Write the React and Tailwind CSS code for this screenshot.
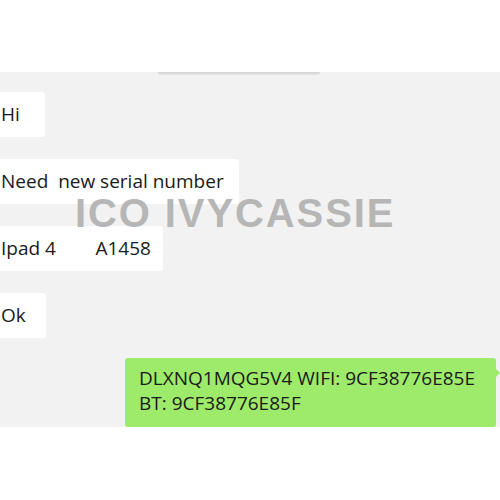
const LEFT_MESSAGES = [
  { text: "Hi", width: "w-[45px]" },
  { text: "Need  new serial number", width: "w-[239px]" },
  { text: "Ipad 4        A1458", width: "w-[163px]" },
  { text: "Ok", width: "w-[46px]" },
];

export default function App() {
  return (
    <div
      className="relative w-[500px] h-[500px] bg-white flex flex-col overflow-hidden"
      style={{ fontFamily: '"Open Sans", "Noto Sans", sans-serif' }}
    >
      {/* top white strip */}
      <div className="h-[72px] shrink-0" />

      {/* chat area */}
      <div className="h-[355px] shrink-0 bg-[#f2f2f2] flex flex-col">
        <div className="h-[3px] w-[162px] ml-[158px] bg-gradient-to-b from-[#d2d2d2] to-[#e6e6e6] rounded-b-sm" />

        <div className="flex flex-col gap-[22px] mt-[17px]">
          {LEFT_MESSAGES.map((msg) => (
            <div
              key={msg.text}
              className={`${msg.width} h-[45px] bg-white flex items-center pl-[1px] text-[19px] text-[#1a1a1a] whitespace-pre rounded-r-[3px]`}
            >
              {msg.text}
            </div>
          ))}
        </div>

        {/* outgoing bubble */}
        <div className="mt-[20px] ml-[125px] relative w-[371px] h-[70px] bg-[#9eea6a] rounded-[3px] pl-[14px] pt-[8px] text-[19px] leading-[25px] text-[#1a1a1a]">
          <div>DLXNQ1MQG5V4 WIFI: 9CF38776E85E</div>
          <div>BT: 9CF38776E85F</div>
          <span className="absolute -right-[4px] top-[10px] w-0 h-0 border-y-[5px] border-y-transparent border-l-[5px] border-l-[#9eea6a]" />
        </div>
      </div>

      {/* watermark */}
      <div
        className="absolute left-[75px] top-[190px] text-[40px] font-bold text-[#b6b6b6] leading-[46px] tracking-[1.9px] pointer-events-none"
        style={{ fontFamily: '"Liberation Sans", Arial, sans-serif' }}
      >
        ICO IVYCASSIE
      </div>
    </div>
  );
}
